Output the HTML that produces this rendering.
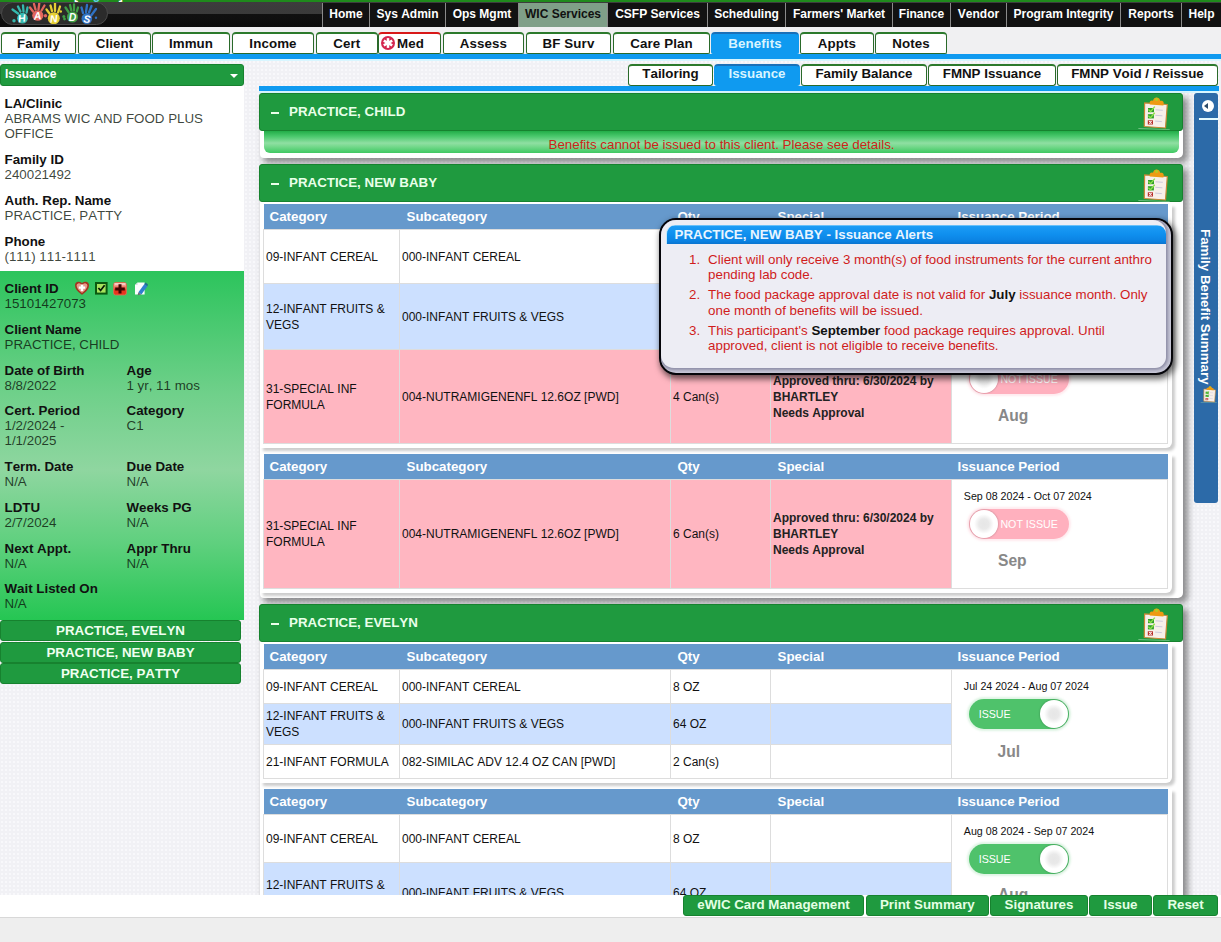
<!DOCTYPE html>
<html><head><meta charset="utf-8"><title>Issuance</title>
<style>
*{box-sizing:border-box;margin:0;padding:0}
html,body{width:1221px;height:942px;overflow:hidden}
body{position:relative;font-kerning:none;font-family:"Liberation Sans",Arial,sans-serif;font-size:13.33px;color:#222;background:#f1f1f5;
 background-image:radial-gradient(#f8f8fb 0.8px,transparent 1.1px);background-size:4px 4px;}
.abs{position:absolute}
/* top */
#gbar{left:0;top:0;width:1221px;height:2.2px;background:#1f8a1c}
#dbar{left:0;top:2.2px;width:1221px;height:24.5px;background:linear-gradient(#3d3d3d 0,#3a3a3a 46%,#111 46%,#0c0c0c 100%)}
#logo{left:1px;top:2.4px;width:107px;height:23px;border-radius:12px;background:#2b2b2b;border:1px solid #4a4a4a;overflow:hidden}
#menu{left:322px;top:2.5px;height:24px;display:flex}
#menu div{background:#121212;height:24.3px;line-height:23px;font-weight:bold;font-size:12px;color:#fff;border-left:1px solid #8a8a8a;text-align:center;white-space:nowrap}
#menu div.on{background:#7f9f88;color:#111}
#tabstrip{left:0;top:26.8px;width:1221px;height:27px;background:#f0f0f2}
.tab{position:absolute;top:32px;height:22px;background:#fff;border:1px solid #2a6a2a;border-top:2px solid #2c7a2c;border-radius:4px 4px 2px 2px;font-weight:bold;font-size:13.33px;line-height:19px;text-align:center;color:#111;letter-spacing:.1px}
.tab.on{background:#0f9af0;border-color:#0f9af0;border-top-color:#1a70b8;color:#d8f4ff}
#bline{left:0;top:53.5px;width:1221px;height:5px;background:#0f9af0}
#bline2{left:0;top:58.5px;width:1221px;height:2.5px;background:#d8f6ff}
.stab{position:absolute;top:64px;height:22px;background:#fff;border:1px solid #2a6a2a;border-top:2px solid #2c7a2c;border-radius:4px 4px 3px 3px;font-weight:bold;font-size:13.33px;line-height:16.5px;text-align:center;color:#111}
.stab.on{background:#0f9af0;border-color:#0f9af0;border-top-color:#1a70b8;color:#d8f4ff}
#sline{left:259px;top:86px;width:960px;height:6.5px;background:#0f9af0;border-bottom:2px solid #d8f6ff}

/* sidebar */
#sdrop{left:0;top:64px;width:244px;height:22px;background:#1f9a3f;border:1px solid #17822f;border-radius:3px;color:#fff;font-weight:bold;font-size:12px;line-height:19px;padding-left:4px}
#sdrop:after{content:"";position:absolute;right:5px;top:9px;border:4px solid transparent;border-top:4px solid #fff}
#swhite{left:0;top:86px;width:244px;height:185px;background:#fff}
#sgreen{left:0;top:271px;width:244px;height:349px;background:linear-gradient(#2cc45c 0,#6fd08a 35%,#8fd6a0 57%,#5fd07e 78%,#25c653 100%)}
.sl{position:absolute;left:4.5px;font-size:13.33px;line-height:15px;white-space:nowrap;color:rgba(10,20,10,.8)}
.sl b{color:#111;display:block;line-height:15px}
.sr{left:126.5px}
.sbtn{position:absolute;left:0;width:241px;height:21px;background:#1f9a3f;border:1px solid #17822f;border-radius:3px;color:#f0fff0;font-weight:bold;font-size:13.33px;line-height:19px;text-align:center}

/* main */
.phead{position:absolute;left:259px;width:924px;height:38px;background:#1f9a3f;border:1px solid #17822f;border-radius:3px;color:#e9ffe9;font-weight:bold;font-size:13.33px;line-height:35px;padding-left:29px;z-index:3}
.phead:before{content:"";position:absolute;left:10.5px;top:18px;width:8px;height:2px;background:#e9ffe9}
.pbody{position:absolute;left:260px;width:923px;background:#fff;box-shadow:4px 4px 6px 1px rgba(40,40,40,.5);border-radius:0 0 5px 4px;z-index:1}
.msg{position:absolute;left:264px;top:131px;width:915px;height:22px;border-radius:0 0 6px 6px;background:linear-gradient(#22ad48 0,#4cc96e 25%,#8fdfa2 55%,#76d98d 70%,#3fc862 100%);color:#cc2418;font-size:13.33px;line-height:27.4px;text-align:center;z-index:2}
.twrap{position:absolute;left:260px;width:912px;background:#fff;border-radius:0 0 6px 0;box-shadow:3px 3px 3px rgba(0,0,0,.2);z-index:2}
table.t{position:absolute;left:3px;top:0;border-collapse:collapse;table-layout:fixed;width:904px;font-size:12px;color:#111}
table.t th{background:#6699cc;color:#fff;font-weight:bold;font-size:13.33px;text-align:left;height:25px;padding:0 0 0 6px;border:none}
table.t td{border:1px solid #ddd;padding:1px 2px 0 2px;line-height:16px;vertical-align:middle}
table.t tr.w td{background:#fff}
table.t tr.b td{background:#cce0ff}
table.t tr.p td{background:#ffb6c1}
table.t td.ip{background:#fff !important;vertical-align:top;padding:0}
table.t td.sp{font-weight:bold;color:#222;line-height:16px}
.dt{font-size:10.67px;margin:9.1px 0 0 11.8px;line-height:14px}
.tg{position:relative;margin:6.1px 0 0 17.1px;width:100px;height:30px;border-radius:15px;font-size:10.67px;line-height:30px;color:#fff;white-space:nowrap}
.tg.on{background:#4fc26b;padding-left:9.6px;box-shadow:0 0 2px 2px rgba(79,194,107,.18)}
.tg.off{background:#ffb0be;padding-left:31.3px;box-shadow:0 0 2px 2px rgba(255,176,190,.25)}
.tg i{position:absolute;top:1px;width:28px;height:28px;border-radius:14px;background:radial-gradient(circle at 50% 50%,#e6e6e6 0,#e9e9e9 25%,#fff 50%);box-shadow:0 0 2px rgba(0,0,0,.35)}
.tg.on i{right:1px}.tg.off i{left:1px}
.mo{font-weight:bold;font-size:15.6px;color:#888;margin:12.4px 0 0 46px;line-height:20px}

/* popup */
#pop{left:659.1px;top:218.1px;width:514px;height:157.4px;border:2px solid #05050a;border-radius:17px;background:#c6c6d6;box-shadow:2px 3px 6px 1px rgba(0,0,0,.6);z-index:10;overflow:hidden}
#pin{position:absolute;left:0;top:0;right:5.5px;bottom:5.5px;background:#ededf4;border-radius:15px 13px 11px 13px;box-shadow:0 0 3px 1.5px #8e8ea6}
#ptitle{position:absolute;left:5px;top:4.6px;width:500px;height:19.8px;border-radius:9px 9px 0 0;border-left:1px solid #bfeaff;background:linear-gradient(#8fd3fb 0,#1b9bf5 8%,#0f8fee 50%,#0b82e2 85%,#0a74cf 100%);color:#e9f5ff;font-weight:bold;font-size:13.33px;line-height:19px;padding-left:7.5px;white-space:nowrap}
#pop ol{position:absolute;left:47px;top:31.5px;width:455px;list-style:none;color:#d01c1c;font-size:13.33px;line-height:15.4px}
#pop li{position:relative;margin-bottom:4.9px}
#pop li span{position:absolute;left:-19px}
#pop li b{color:#111}
/* right */
#rp{left:1194px;top:93px;width:23.5px;height:410px;background:#2c6aa8;border-radius:3px;z-index:4}
#rp .c{position:absolute;left:7.5px;top:7px;width:12px;height:12px;border-radius:6px;background:#fff}
#rp .c:after{content:"";position:absolute;left:2px;top:3px;border:3px solid transparent;border-right:4px solid #2c4a68;border-left:0}
#rp .ln{position:absolute;left:5px;top:25px;width:19px;height:1.5px;background:#e6fbff}
#rp .vt{position:absolute;left:18.5px;top:136px;transform-origin:0 0;transform:rotate(90deg);color:#fff;font-weight:bold;font-size:13.33px;white-space:nowrap;line-height:16px;}
/* bottom */
#bbar{left:0;top:894.8px;width:1221px;height:23px;background:#fff;z-index:20}
#foot{left:0;top:917px;width:1221px;height:25px;background:#eeeeee;border-top:1px solid #d8d8d8;z-index:21}
.bb{position:absolute;top:895px;height:21px;background:#1f9a3f;border:1px solid #17822f;border-radius:3px;color:#e4ffe4;font-weight:bold;font-size:13.33px;line-height:18.6px;text-align:center;z-index:22}
table.t3 th{height:25.8px}table.t4 th{height:25.7px}table.t4 .mo{margin-top:10.3px}table.t3 .mo{margin-left:45.5px}
</style></head><body>
<svg width="0" height="0" style="position:absolute"><defs>
<g id="clip">
<path d="M-2.6 33 L28.7 34.2 L28.7 35 L-2.6 33.9Z" fill="#a8dcb0" opacity=".6"/>
<path d="M3.6 7.9 L26.3 9.5 L24.5 33 L3.3 31.5Z" fill="#f7efe9" stroke="#c98736" stroke-width="1.2" stroke-linejoin="round"/>
<path d="M8.8 9.4 C7.8 6 10.4 5 12 5.8 C12.6 1.4 18.4 1.2 19.4 6 C21.6 5.4 23.6 6.8 22.4 10.4Z" fill="#ee9a12"/>
<circle cx="15.6" cy="4.4" r="1.6" fill="#b9c81f"/>
<rect x="7" y="13" width="6" height="4.2" fill="#2f9e2c"/><path d="M7.4 14.6 L9.6 16.6 L13.8 11.6" stroke="#8ee04a" stroke-width="1.4" fill="none"/>
<rect x="6.9" y="19.2" width="6" height="4.2" fill="#2f9e2c"/><path d="M7.3 20.8 L9.5 22.8 L13.7 17.8" stroke="#8ee04a" stroke-width="1.4" fill="none"/>
<rect x="6.8" y="25.3" width="5.2" height="4.2" fill="#b8302a"/><path d="M8.2 26.2 L10.6 28.6 M10.6 26.2 L8.2 28.6" stroke="#fff" stroke-width="1.1"/>
<path d="M14.6 14.8 L21.8 15.3 M14.4 20.3 L21.4 20.8 M14.2 26.1 L20.8 26.6" stroke="#cfcadb" stroke-width="1"/>
</g>
</defs></svg>
<div class="abs" id="gbar"></div>
<div class="abs" id="dbar"></div>
<div class="abs" style="left:74px;top:-11.6px;font:bold 12px/14px 'Liberation Sans',sans-serif;color:#fff;white-space:nowrap;z-index:2">[<span style="color:#5fd0e0">Logout</span>]</div>
<div class="abs" id="logo"><svg width="107" height="23" viewBox="1 3 107 23" style="position:absolute;left:-1px;top:-1px"><ellipse cx="22.5" cy="19.2" rx="5.4" ry="5.4" fill="#35b8ae"/><line x1="18" y1="14.5" x2="12.5" y2="10.5" stroke="#35b8ae" stroke-width="2.3" stroke-linecap="round"/><line x1="20.5" y1="12.5" x2="18" y2="7.5" stroke="#35b8ae" stroke-width="2.3" stroke-linecap="round"/><line x1="23.5" y1="12.5" x2="23" y2="6.5" stroke="#35b8ae" stroke-width="2.3" stroke-linecap="round"/><line x1="26.5" y1="13.5" x2="27.5" y2="8.5" stroke="#35b8ae" stroke-width="2.3" stroke-linecap="round"/><circle cx="14" cy="21.8" r="1.7" fill="#35b8ae"/><text x="22.3" y="23" font-family="Liberation Sans, sans-serif" font-weight="bold" font-style="italic" font-size="10.5" fill="#fff" text-anchor="middle" transform="rotate(-8 22.3 23)">H</text><ellipse cx="37.8" cy="16.5" rx="5.6" ry="5.2" fill="#e2665e"/><line x1="33" y1="12.5" x2="30" y2="8.5" stroke="#e2665e" stroke-width="2.3" stroke-linecap="round"/><line x1="35.5" y1="10.5" x2="34" y2="5" stroke="#e2665e" stroke-width="2.3" stroke-linecap="round"/><line x1="38.5" y1="10.5" x2="39.3" y2="4" stroke="#e2665e" stroke-width="2.3" stroke-linecap="round"/><line x1="41.5" y1="11.5" x2="44.5" y2="6.5" stroke="#e2665e" stroke-width="2.3" stroke-linecap="round"/><circle cx="45.5" cy="16.8" r="1.7" fill="#e2665e"/><text x="37.8" y="20.3" font-family="Liberation Sans, sans-serif" font-weight="bold" font-style="italic" font-size="10.5" fill="#fff" text-anchor="middle" transform="rotate(-5 37.8 20.3)">A</text><ellipse cx="53.8" cy="19.3" rx="6" ry="6" fill="#e6d034"/><line x1="49.5" y1="14.5" x2="46.5" y2="10.5" stroke="#e6d034" stroke-width="2.3" stroke-linecap="round"/><line x1="52" y1="12" x2="50.5" y2="6.5" stroke="#e6d034" stroke-width="2.3" stroke-linecap="round"/><line x1="55" y1="12" x2="55" y2="4.5" stroke="#e6d034" stroke-width="2.3" stroke-linecap="round"/><line x1="58" y1="13.5" x2="60" y2="7.5" stroke="#e6d034" stroke-width="2.3" stroke-linecap="round"/><circle cx="60.8" cy="12.5" r="1.2" fill="#e6d034"/><text x="54" y="23.5" font-family="Liberation Sans, sans-serif" font-weight="bold" font-style="italic" font-size="10.5" fill="#fff" text-anchor="middle" transform="rotate(-5 54 23.5)">N</text><ellipse cx="72.5" cy="18" rx="5.6" ry="5.5" fill="#3f9e46"/><line x1="68.5" y1="13" x2="65.5" y2="8.5" stroke="#3f9e46" stroke-width="2.3" stroke-linecap="round"/><line x1="71.3" y1="11.5" x2="70" y2="6" stroke="#3f9e46" stroke-width="2.3" stroke-linecap="round"/><line x1="74" y1="11.5" x2="74" y2="5.5" stroke="#3f9e46" stroke-width="2.3" stroke-linecap="round"/><line x1="76.8" y1="12.5" x2="78" y2="8.5" stroke="#3f9e46" stroke-width="2.3" stroke-linecap="round"/><circle cx="63.8" cy="17.5" r="1.5" fill="#3f9e46"/><circle cx="64.5" cy="20" r="1.4" fill="#3f9e46"/><text x="72.5" y="22" font-family="Liberation Sans, sans-serif" font-weight="bold" font-style="italic" font-size="10.5" fill="#fff" text-anchor="middle" transform="rotate(0 72.5 22)">D</text><ellipse cx="86.8" cy="19.6" rx="5.3" ry="5.5" fill="#2f72c4"/><line x1="83" y1="14" x2="81.5" y2="8.5" stroke="#2f72c4" stroke-width="2.3" stroke-linecap="round"/><line x1="86" y1="13" x2="87" y2="6" stroke="#2f72c4" stroke-width="2.3" stroke-linecap="round"/><line x1="89" y1="13.5" x2="91.5" y2="7" stroke="#2f72c4" stroke-width="2.3" stroke-linecap="round"/><line x1="91.5" y1="16" x2="96" y2="10" stroke="#2f72c4" stroke-width="2.3" stroke-linecap="round"/><circle cx="96" cy="18.8" r="1.2" fill="#2f72c4"/><text x="86.5" y="23.7" font-family="Liberation Sans, sans-serif" font-weight="bold" font-style="italic" font-size="10.5" fill="#fff" text-anchor="middle" transform="rotate(8 86.5 23.7)">S</text></svg></div>
<div class="abs" id="menu">
<div style="width:47px">Home</div><div style="width:76px">Sys Admin</div><div style="width:73px">Ops Mgmt</div><div class="on" style="width:89px">WIC Services</div><div style="width:100px">CSFP Services</div><div style="width:78px">Scheduling</div><div style="width:107px">Farmers' Market</div><div style="width:58px">Finance</div><div style="width:56px">Vendor</div><div style="width:114px">Program Integrity</div><div style="width:61px">Reports</div><div style="width:40px">Help</div>
</div>
<div class="abs" id="tabstrip"></div>
<div class="tab" style="left:1px;width:75px">Family</div>
<div class="tab" style="left:78px;width:73px">Client</div>
<div class="tab" style="left:152px;width:78px">Immun</div>
<div class="tab" style="left:232px;width:82px">Income</div>
<div class="tab" style="left:316px;width:61.5px">Cert</div>
<div class="tab" style="left:378px;width:63px;border-top-color:#d81818;text-align:left;padding-left:18px"><svg width="16" height="16" viewBox="-8 -8 16 16" style="position:absolute;left:1.2px;top:1.2px"><circle r="7" fill="#d4264e"/><g stroke="#fff" stroke-width="2.5"><line x1="0" y1="-4.9" x2="0" y2="4.9"/><line x1="-4.24" y1="-2.45" x2="4.24" y2="2.45"/><line x1="-4.24" y1="2.45" x2="4.24" y2="-2.45"/></g></svg>Med</div>
<div class="tab" style="left:443px;width:81px">Assess</div>
<div class="tab" style="left:526px;width:85px">BF Surv</div>
<div class="tab" style="left:613px;width:97px">Care Plan</div>
<div class="tab on" style="left:711px;width:88px">Benefits</div>
<div class="tab" style="left:800px;width:74px">Appts</div>
<div class="tab" style="left:875px;width:72px">Notes</div>
<div class="abs" id="bline"></div><div class="abs" id="bline2"></div>
<div class="stab" style="left:628px;width:85px">Tailoring</div>
<div class="stab on" style="left:714px;width:86px">Issuance</div>
<div class="stab" style="left:801px;width:126px">Family Balance</div>
<div class="stab" style="left:928px;width:128px">FMNP Issuance</div>
<div class="stab" style="left:1057px;width:161px">FMNP Void / Reissue</div>
<div class="abs" id="sline"></div>
<div class="abs" id="sdrop">Issuance</div>
<div class="abs" id="swhite"></div>
<div class="abs" id="sgreen"></div>
<div class="sl" style="top:95.7px"><b>LA/Clinic</b>ABRAMS WIC AND FOOD PLUS<br>OFFICE</div>
<div class="sl" style="top:151.7px"><b>Family ID</b>240021492</div>
<div class="sl" style="top:192.7px"><b>Auth. Rep. Name</b>PRACTICE, PATTY</div>
<div class="sl" style="top:233.7px"><b>Phone</b>(111) 111-1111</div>
<div class="sl" style="top:280.7px"><b>Client ID</b>15101427073</div>
<div class="sl" style="top:321.7px"><b>Client Name</b>PRACTICE, CHILD</div>
<div class="sl" style="top:362.7px"><b>Date of Birth</b>8/8/2022</div>
<div class="sl sr" style="top:362.7px"><b>Age</b>1 yr, 11 mos</div>
<div class="sl" style="top:402.7px"><b>Cert. Period</b>1/2/2024 -<br>1/1/2025</div>
<div class="sl sr" style="top:402.7px"><b>Category</b>C1</div>
<div class="sl" style="top:458.7px"><b>Term. Date</b>N/A</div>
<div class="sl sr" style="top:458.7px"><b>Due Date</b>N/A</div>
<div class="sl" style="top:499.7px"><b>LDTU</b>2/7/2024</div>
<div class="sl sr" style="top:499.7px"><b>Weeks PG</b>N/A</div>
<div class="sl" style="top:540.7px"><b>Next Appt.</b>N/A</div>
<div class="sl sr" style="top:540.7px"><b>Appr Thru</b>N/A</div>
<div class="sl" style="top:580.7px"><b>Wait Listed On</b>N/A</div>
<div class="sbtn" style="top:620px">PRACTICE, EVELYN</div>
<div class="sbtn" style="top:642px">PRACTICE, NEW BABY</div>
<div class="sbtn" style="top:663px">PRACTICE, PATTY</div>
<svg class="abs" style="left:75px;top:281px" width="14" height="14" viewBox="0 0 14 14"><path d="M7 12.8 C3 10 0.8 7.4 0.8 4.4 C0.8 1.6 4.6 0.2 7 3.2 C9.4 0.2 13.2 1.6 13.2 4.4 C13.2 7.4 11 10 7 12.8Z" fill="#e89a8c" stroke="#a23420" stroke-width="1.6"/><path d="M7 3.6 V10 M3.8 6.6 H10.2" stroke="#fff" stroke-width="2.4"/></svg>
<svg class="abs" style="left:95px;top:282px" width="13" height="13" viewBox="0 0 13 13"><rect x="1" y="1" width="10.6" height="10.6" fill="#a6e25c" stroke="#0b5a10" stroke-width="2"/><path d="M3.4 6 L5.6 8.4 L9.6 3.2" stroke="#061806" stroke-width="1.7" fill="none"/></svg>
<svg class="abs" style="left:113px;top:281.5px" width="14" height="14" viewBox="0 0 14 14"><rect x=".6" y=".6" width="12.8" height="12.4" rx="2" fill="#e8341e" stroke="#e07058" stroke-width=".8"/><rect x="1" y="1" width="12" height="2.2" rx="1.2" fill="#f7c8c0"/><rect x="1" y="3" width="12" height="1.8" fill="#f29a8c"/><rect x="1" y="4.8" width="12" height="1.8" fill="#ee6a58"/><path d="M7 2.2 V11.6 M2.2 6.9 H11.8" stroke="#3e0402" stroke-width="3"/></svg>
<svg class="abs" style="left:134px;top:281px" width="14" height="15" viewBox="0 0 14 15"><path d="M3.6 1.4 H10.6 V13.6 H1 V4Z" fill="#fbfdfd"/><path d="M3.6 1.4 V4 H1Z" fill="#d8dde4"/><path d="M4.4 11.2 L10.4 3 L13.4 5.2 L7.4 13.4Z" fill="#2f7fd0"/><path d="M10.4 3 L11.6 1.6 L14 3.4 L13.4 5.2Z" fill="#1f6a90"/><path d="M4.4 11.2 L7.4 13.4 L3.6 14.2Z" fill="#6a6a72"/></svg>
<!--SIDEBAR-->
<div class="phead" style="top:93px">PRACTICE, CHILD</div>
<div class="pbody" style="top:95px;height:63px"></div>
<div class="msg">Benefits cannot be issued to this client. Please see details.</div>
<div class="phead" style="top:164px">PRACTICE, NEW BABY</div>
<div class="pbody" style="top:166px;height:432px"></div>
<div class="twrap" style="top:204px;height:244px"><table class="t"><colgroup><col style="width:136px"><col style="width:271px"><col style="width:100px"><col style="width:181px"><col style="width:216px"></colgroup><tr><th>Category</th><th style="padding-left:7px">Subcategory</th><th style="padding-left:7px">Qty</th><th style="padding-left:7px">Special</th><th style="padding-left:6px">Issuance Period</th></tr><tr class="w" style="height:54px"><td>09-INFANT CEREAL</td><td>000-INFANT CEREAL</td><td></td><td class="sp"></td><td class="ip" rowspan="3"><div class="dt" style="margin-top:114.4px">Aug 08 2024 - Sep 07 2024</div><div class="tg off">NOT ISSUE<i></i></div><div class="mo">Aug</div></td></tr><tr class="b" style="height:66px"><td>12-INFANT FRUITS &amp; VEGS</td><td>000-INFANT FRUITS &amp; VEGS</td><td></td><td class="sp"></td></tr><tr class="p" style="height:94px"><td>31-SPECIAL INF FORMULA</td><td>004-NUTRAMIGENENFL 12.6OZ [PWD]</td><td>4 Can(s)</td><td class="sp">Approved thru: 6/30/2024 by BHARTLEY<br>Needs Approval</td></tr></table></div>
<div class="twrap" style="top:454px;height:139px"><table class="t"><colgroup><col style="width:136px"><col style="width:271px"><col style="width:100px"><col style="width:181px"><col style="width:216px"></colgroup><tr><th>Category</th><th style="padding-left:7px">Subcategory</th><th style="padding-left:7px">Qty</th><th style="padding-left:7px">Special</th><th style="padding-left:6px">Issuance Period</th></tr><tr class="p" style="height:109.5px"><td>31-SPECIAL INF FORMULA</td><td>004-NUTRAMIGENENFL 12.6OZ [PWD]</td><td>6 Can(s)</td><td class="sp">Approved thru: 6/30/2024 by BHARTLEY<br>Needs Approval</td><td class="ip" rowspan="1"><div class="dt">Sep 08 2024 - Oct 07 2024</div><div class="tg off">NOT ISSUE<i></i></div><div class="mo">Sep</div></td></tr></table></div>
<div class="phead" style="top:604px">PRACTICE, EVELYN</div>
<div class="pbody" style="top:606px;height:294px"></div>
<div class="twrap" style="top:643.7px;height:139px"><table class="t t3"><colgroup><col style="width:136px"><col style="width:271px"><col style="width:100px"><col style="width:181px"><col style="width:216px"></colgroup><tr><th>Category</th><th style="padding-left:7px">Subcategory</th><th style="padding-left:7px">Qty</th><th style="padding-left:7px">Special</th><th style="padding-left:6px">Issuance Period</th></tr><tr class="w" style="height:34px"><td>09-INFANT CEREAL</td><td>000-INFANT CEREAL</td><td>8 OZ</td><td class="sp"></td><td class="ip" rowspan="3"><div class="dt">Jul 24 2024 - Aug 07 2024</div><div class="tg on">ISSUE<i></i></div><div class="mo">Jul</div></td></tr><tr class="b" style="height:41px"><td>12-INFANT FRUITS &amp; VEGS</td><td>000-INFANT FRUITS &amp; VEGS</td><td>64 OZ</td><td class="sp"></td></tr><tr class="w" style="height:34px"><td>21-INFANT FORMULA</td><td>082-SIMILAC ADV 12.4 OZ CAN [PWD]</td><td>2 Can(s)</td><td class="sp"></td></tr></table></div>
<div class="twrap" style="top:789px;height:120px"><table class="t t4"><colgroup><col style="width:136px"><col style="width:271px"><col style="width:100px"><col style="width:181px"><col style="width:216px"></colgroup><tr><th>Category</th><th style="padding-left:7px">Subcategory</th><th style="padding-left:7px">Qty</th><th style="padding-left:7px">Special</th><th style="padding-left:6px">Issuance Period</th></tr><tr class="w" style="height:48.3px"><td>09-INFANT CEREAL</td><td>000-INFANT CEREAL</td><td>8 OZ</td><td class="sp"></td><td class="ip" rowspan="3"><div class="dt">Aug 08 2024 - Sep 07 2024</div><div class="tg on">ISSUE<i></i></div><div class="mo">Aug</div></td></tr><tr class="b" style="height:60px"><td>12-INFANT FRUITS &amp; VEGS</td><td>000-INFANT FRUITS &amp; VEGS</td><td>64 OZ</td><td class="sp"></td></tr><tr class="w" style="height:40px"><td>21-INFANT FORMULA</td><td>082-SIMILAC ADV 12.4 OZ CAN [PWD]</td><td>2 Can(s)</td><td class="sp"></td></tr></table></div>
<svg class="abs" style="left:1141px;top:95px;z-index:5;overflow:visible" width="30" height="36"><use href="#clip"/></svg>
<svg class="abs" style="left:1141px;top:166.5px;z-index:5;overflow:visible" width="30" height="36"><use href="#clip"/></svg>
<svg class="abs" style="left:1141px;top:606px;z-index:5;overflow:visible" width="30" height="36"><use href="#clip"/></svg>
<!--MAIN-->
<div class="abs" id="pop"><div id="pin"></div><div id="ptitle">PRACTICE, NEW BABY - Issuance Alerts</div>
<ol><li><span>1.</span>Client will only receive 3 month(s) of food instruments for the current anthro pending lab code.</li>
<li><span>2.</span>The food package approval date is not valid for <b>July</b> issuance month. Only one month of benefits will be issued.</li>
<li><span>3.</span>This participant's <b>September</b> food package requires approval. Until approved, client is not eligible to receive benefits.</li></ol></div>

<div class="abs" id="rp"><div class="c"></div><div class="ln"></div><div class="vt">Family Benefit Summary</div><svg style="position:absolute;left:8px;top:291.5px;overflow:visible" width="15.5" height="18.5" viewBox="0 0 30 36"><use href="#clip"/></svg></div>

<div class="abs" id="bbar"></div><div class="abs" id="foot"></div>
<div class="bb" style="left:683px;width:181px">eWIC Card Management</div>
<div class="bb" style="left:866px;width:122.7px">Print Summary</div>
<div class="bb" style="left:990px;width:98px">Signatures</div>
<div class="bb" style="left:1089px;width:63px">Issue</div>
<div class="bb" style="left:1153.3px;width:64.5px">Reset</div>

</body></html>
